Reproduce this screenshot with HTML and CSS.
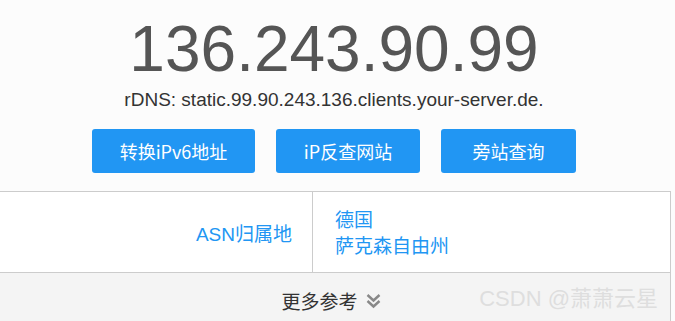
FILE: index.html
```html
<!DOCTYPE html>
<html lang="zh-CN">
  <head>
    <meta charset="UTF-8" />
    <meta name="viewport" content="width=device-width, initial-scale=1.0" />
    <title>IP查询</title>
    <link rel="stylesheet" href="styles.css">
  </head>
  <body>
    <div class="wrap">
      <section class="hero">
        <h1 class="ip">136.243.90.99</h1>
        <p class="rdns">rDNS: static.99.90.243.136.clients.your-server.de.</p>
        <div class="actions">
          <a class="btn btn-ipv6" href="#">转换iPv6地址</a>
          <a class="btn btn-reverse" href="#">iP反查网站</a>
          <a class="btn btn-side" href="#">旁站查询</a>
        </div>
      </section>
      <div class="info">
        <div class="info-row">
          <div class="info-label">ASN归属地</div>
          <div class="info-value">
            <span>德国</span>
            <span>萨克森自由州</span>
          </div>
        </div>
        <div class="more">
          <span>更多参考</span>
          <svg class="more-icon" width="15" height="16" viewBox="0 0 15 16" aria-hidden="true">
            <path d="M1.5 2 L7.5 7.5 L13.5 2" fill="none" stroke="#888" stroke-width="2.4" />
            <path d="M1.5 8 L7.5 13.5 L13.5 8" fill="none" stroke="#888" stroke-width="2.4" />
          </svg>
        </div>
        <div class="watermark">CSDN @萧萧云星</div>
      </div>
    </div>
  </body>
</html>
```

FILE: styles.css
```css
/*********** Base ***********/
html,
body {
  margin: 0;
  background: #fcfcfc;
}

body {
  font-family: "Liberation Sans", Arial, "Noto Sans CJK SC", sans-serif;
  color: #333;
}

.wrap {
  width: 671px;
}

/*********** Header: ip + actions ***********/
.hero {
  width: 668px;
  text-align: center;
  padding-top: 17px;
}

.ip {
  margin: 0;
  font-size: 64px;
  line-height: 64px;
  font-weight: normal;
  color: #555;
}

.rdns {
  margin: 8px 0 0;
  font-size: 19px;
  line-height: 22px;
  color: #333;
}

.actions {
  display: flex;
  justify-content: center;
  gap: 21px;
  margin-top: 18px;
}

.btn {
  display: block;
  height: 44px;
  line-height: 44px;
  text-align: center;
  border-radius: 3px;
  background: #2196f3;
  color: #fff;
  font-family: "Noto Sans CJK SC", sans-serif;
  font-size: 18px;
  text-decoration: none;
}

.btn-ipv6 {
  width: 163px;
}

.btn-reverse {
  width: 144px;
}

.btn-side {
  width: 135px;
}

/*********** Info table ***********/
.info {
  position: relative;
  margin-top: 18px;
  border-top: 1px solid #ccc;
  border-right: 1px solid #ccc;
}

.info-row {
  display: grid;
  grid-template-columns: 313px 1fr;
  height: 80px;
  background: #fff;
  border-bottom: 1px solid #ccc;
}

.info-label {
  display: flex;
  align-items: center;
  justify-content: flex-end;
  padding-right: 20px;
  border-right: 1px solid #ccc;
  color: #2196f3;
  font-family: "Liberation Sans", "Noto Sans CJK SC", sans-serif;
  font-size: 19px;
}

.info-value {
  display: flex;
  flex-direction: column;
  justify-content: center;
  padding-left: 22px;
  color: #2196f3;
  font-family: "Noto Sans CJK SC", sans-serif;
  font-size: 19px;
  line-height: 26px;
}

.more {
  display: flex;
  align-items: center;
  justify-content: center;
  gap: 8px;
  height: 60px;
  padding: 0 8px 4px 0;
  box-sizing: border-box;
  background: #f4f4f4;
  color: #333;
  font-family: "Noto Sans CJK SC", sans-serif;
  font-size: 19px;
  line-height: 26px;
}

.more-icon {
  display: block;
}

/* watermark sits over the bar */
.watermark {
  position: absolute;
  right: 12px;
  top: 94px;
  color: #dedede;
  font-family: "Liberation Sans", "Noto Sans CJK SC", sans-serif;
  font-size: 22px;
  line-height: 26px;
  pointer-events: none;
}
```
